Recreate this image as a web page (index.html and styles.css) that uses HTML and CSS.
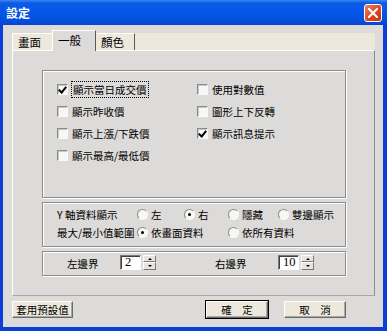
FILE: index.html
```html
<!DOCTYPE html>
<html lang="zh-Hant">
<head>
    <meta charset="UTF-8">
    <title>設定</title>
    <link rel="stylesheet" href="styles.css">
</head>
<body>
    <div class="window">
        <div class="titlebar">
            <span class="title">設定</span>
            <span class="close">
                <svg width="10" height="10" viewBox="0 0 10 10"><path d="M1 1 L9 9 M9 1 L1 9" stroke="#fff" stroke-width="2" stroke-linecap="square"/></svg>
            </span>
        </div>
        <div class="client">
            <div class="tabs">
                <div class="tab">畫面</div>
                <div class="tab active">一般</div>
                <div class="tab">顏色</div>
            </div>
            <div class="panel">
                <div class="group checks">
                    <label class="check"><span class="box on"></span><span class="focus">顯示當日成交價</span></label>
                    <label class="check"><span class="box"></span>使用對數值</label>
                    <label class="check"><span class="box"></span>顯示昨收價</label>
                    <label class="check"><span class="box"></span>圖形上下反轉</label>
                    <label class="check"><span class="box"></span>顯示上漲/下跌價</label>
                    <label class="check"><span class="box on"></span>顯示訊息提示</label>
                    <label class="check"><span class="box"></span>顯示最高/最低價</label>
                </div>
                <div class="group radios">
                    <span class="rlabel">Y 軸資料顯示</span>
                    <label class="radio"><span class="dot"></span>左</label>
                    <label class="radio"><span class="dot on"></span>右</label>
                    <label class="radio"><span class="dot"></span>隱藏</label>
                    <label class="radio"><span class="dot"></span>雙邊顯示</label>
                    <span class="rlabel">最大/最小值範圍</span>
                    <label class="radio wide"><span class="dot on"></span>依畫面資料</label>
                    <label class="radio wide"><span class="dot"></span>依所有資料</label>
                </div>
                <div class="group margins">
                    <span class="mlabel">左邊界</span>
                    <span class="field">2</span>
                    <span class="spin"><span class="up"></span><span class="down"></span></span>
                    <span class="mlabel right">右邊界</span>
                    <span class="field">10</span>
                    <span class="spin"><span class="up"></span><span class="down"></span></span>
                </div>
            </div>
            <div class="buttons">
                <button class="btn">套用預設值</button>
                <span class="spacer"></span>
                <button class="btn default">確　定</button>
                <button class="btn">取　消</button>
            </div>
        </div>
    </div>
</body>
</html>
```

FILE: styles.css
```css
* {
    box-sizing: border-box;
}
body {
    margin: 0;
    width: 387px;
    height: 331px;
    font-family: "Noto Sans CJK TC", sans-serif;
    font-size: 10.5px;
    color: #000;
    background: #fff;
}
.window {
    width: 387px;
    height: 331px;
    display: flex;
    flex-direction: column;
    background: #0a3ed4;
}
.titlebar {
    height: 25px;
    display: flex;
    align-items: center;
    justify-content: space-between;
    padding: 0 5px 0 6px;
    background: linear-gradient(to bottom, #3b86f2 0, #0b5be7 3px, #0657e6 45%, #0350de 80%, #0645cf 100%);
}
.title {
    color: #fff;
    font-weight: bold;
    font-size: 12px;
    letter-spacing: 0;
}
.close {
    width: 18px;
    height: 18px;
    border: 1px solid #fff;
    border-radius: 3px;
    background: linear-gradient(135deg, #f0825f, #d8431d 60%, #c2380f);
    display: flex;
    align-items: center;
    justify-content: center;
}
.client {
    flex: 1;
    margin: 0 4px 4px 3px;
    background: #dcdbd9;
    padding: 5px 8px 0 9px;
    display: flex;
    flex-direction: column;
}
.tabs {
    display: flex;
    align-items: flex-end;
    height: 20px;
    background: linear-gradient(to bottom, transparent 3px, #ece9dc 3px);
}
.tab {
    height: 17px;
    padding: 0 9px 0 5px;
    line-height: 16px;
    font-size: 11.5px;
    border-top: 1px solid #fff;
    border-left: 1px solid #fff;
    border-right: 1px solid #5a5a5a;
    background: #ece9dc;
}
.tab:first-child {
    width: 40px;
    border-right: none;
}
.tab.active {
    height: 21px;
    width: 44px;
    margin-bottom: -1px;
    background: #dcdbd9;
    position: relative;
    line-height: 18px;
}
.tab:last-child {
    width: 39px;
    border-left: none;
}
.panel {
    height: 246px;
    border: 1px solid;
    border-color: #fff #8c8c8c #a8a8a8 #fff;
    padding: 19px 0 0 29px;
    display: flex;
    flex-direction: column;
    gap: 4px;
}
.group {
    width: 304px;
    border: 1px solid #8e8e8e;
    box-shadow: inset 1px 1px 0 #fff, 1px 1px 0 #fff;
}
.checks {
    height: 128px;
    padding: 7px 0 0 14px;
    display: grid;
    grid-template-columns: 140px auto;
    grid-auto-rows: 22px;
    align-items: center;
}
.check, .radio {
    display: flex;
    align-items: center;
    white-space: nowrap;
}
.box {
    width: 11px;
    height: 11px;
    margin-right: 4px;
    border: 1px solid;
    border-color: #8a8a8a #fafafa #fafafa #8a8a8a;
    background: #f7f7f5;
    box-shadow: inset 1px 1px 0 #c8c8c8;
    position: relative;
}
.box.on::after {
    content: "";
    position: absolute;
    left: 2px;
    top: 0px;
    width: 3px;
    height: 6px;
    border-right: 2px solid #000;
    border-bottom: 2px solid #000;
    transform: rotate(40deg);
}
.focus {
    outline: 1px dotted #000;
    outline-offset: 0;
    padding: 0 1px;
}
.radios {
    height: 45px;
    padding: 2px 0 0 14px;
    display: grid;
    grid-template-columns: 80px 47px 44px 50px auto;
    grid-auto-rows: 18px;
    align-items: center;
}
.radio.wide {
    grid-column: span 2;
}
.radio.wide:last-child {
    grid-column: span 2;
}
.dot {
    width: 11px;
    height: 11px;
    margin-right: 3px;
    border-radius: 50%;
    border: 1px solid;
    border-color: #8a8a8a #fafafa #fafafa #8a8a8a;
    background: #f7f7f5;
    position: relative;
}
.dot.on::after {
    content: "";
    position: absolute;
    left: 3px;
    top: 3px;
    width: 3px;
    height: 3px;
    border-radius: 50%;
    background: #000;
}
.margins {
    height: 25px;
    padding-left: 24px;
    display: flex;
    align-items: center;
}
.mlabel {
    width: 53px;
}
.mlabel.right {
    margin-left: 59px;
    width: 63px;
}
.field {
    width: 21px;
    height: 15px;
    border: 1px solid;
    border-color: #7a7a7a #fff #fff #7a7a7a;
    box-shadow: inset 1px 1px 0 #404040;
    background: #fff;
    font-family: "Liberation Serif", serif;
    font-size: 12.5px;
    line-height: 13px;
    padding-left: 4px;
    margin-top: -3px;
}
.spin {
    width: 13px;
    height: 15px;
    margin-left: 2px;
    margin-top: -3px;
    display: flex;
    flex-direction: column;
}
.spin span {
    flex: 1;
    background: #e6e4dc;
    border: 1px solid;
    border-color: #fff #7a7a7a #7a7a7a #fff;
    position: relative;
}
.spin span::after {
    content: "";
    position: absolute;
    left: 4px;
    width: 0;
    height: 0;
    border-left: 2px solid transparent;
    border-right: 2px solid transparent;
}
.spin .up::after {
    top: 2px;
    border-bottom: 2px solid #000;
}
.spin .down::after {
    top: 2px;
    border-top: 2px solid #000;
}
.buttons {
    display: flex;
    margin-top: 5px;
    margin-right: 29px;
    gap: 16px;
}
.spacer {
    flex: 1;
}
.btn {
    height: 17px;
    width: 62px;
    padding: 0;
    font-family: "Noto Sans CJK TC", sans-serif;
    font-size: 10.5px;
    line-height: 13px;
    background: #ece9dc;
    border: 1px solid;
    border-color: #fff #6a6a6a #6a6a6a #fff;
    box-shadow: inset -1px -1px 0 #a8a8a8;
}
.btn:first-child {
    width: 61px;
}
.btn.default {
    outline: 1px solid #000;
}
```
